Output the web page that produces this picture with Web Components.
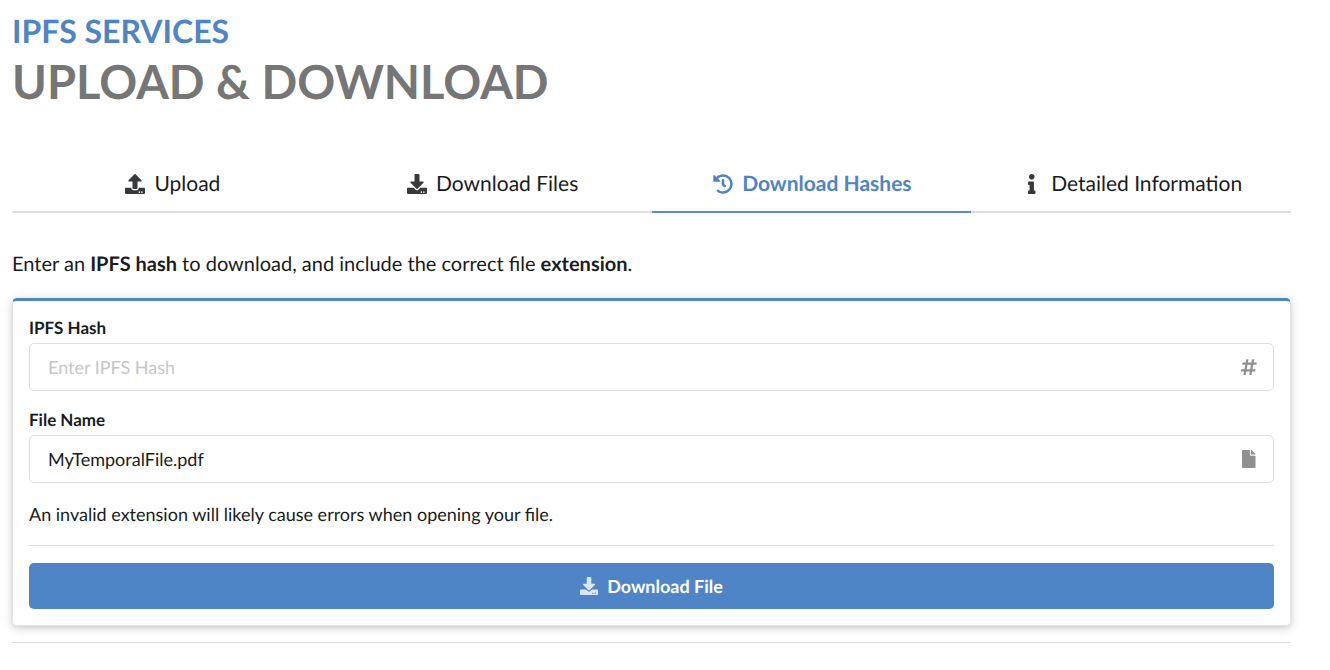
<!DOCTYPE html>
<html lang="en">
<head>
<meta charset="utf-8">
<title>IPFS Services</title>
<style>
  body {
    margin: 0;
    padding: 11px 39px 24px 12px;
    background: #fff;
    color: #1b1c1d;
    font-family: Lato, "Liberation Sans", sans-serif;
    font-size: 20px;
    line-height: 28px;
    text-rendering: geometricPrecision;
  }
</style>
</head>
<body>
<ipfs-page></ipfs-page>
<script>
const DOTS = 'zm-124 88c0-11-9-20-20-20s-20 9-20 20 9 20 20 20 20-9 20-20zm64 0c0-11-9-20-20-20s-20 9-20 20 9 20 20 20 20-9 20-20z';
const ICONS = {
  upload: [512, 'M296 384h-80c-13.3 0-24-10.7-24-24V192h-87.7c-17.8 0-26.7-21.5-14.1-34.1L242.3 5.7c7.5-7.5 19.8-7.5 27.3 0l152.2 152.2c12.6 12.6 3.7 34.1-14.1 34.1H320v168c0 13.3-10.7 24-24 24zm216-8v112c0 13.3-10.7 24-24 24H24c-13.3 0-24-10.7-24-24V376c0-13.3 10.7-24 24-24h136v8c0 30.9 25.1 56 56 56h80c30.9 0 56-25.1 56-56v-8h136c13.3 0 24 10.7 24 24' + DOTS],
  download: [512, 'M216 0h80c13.3 0 24 10.7 24 24v168h87.7c17.8 0 26.7 21.5 14.1 34.1L269.7 378.3c-7.5 7.5-19.8 7.5-27.3 0L90.1 226.1c-12.6-12.6-3.7-34.1 14.1-34.1H192V24c0-13.3 10.7-24 24-24zm296 376v112c0 13.3-10.7 24-24 24H24c-13.3 0-24-10.7-24-24V376c0-13.3 10.7-24 24-24h146.7l49 49c20.1 20.1 52.5 20.1 72.6 0l49-49H488c13.3 0 24 10.7 24 24' + DOTS],
  history: [512, 'M504 255.531c.253 136.64-111.18 248.372-247.82 248.468-59.015.042-113.223-20.53-155.822-54.911-11.077-8.94-11.905-25.541-1.839-35.607l11.267-11.267c8.609-8.609 22.353-9.551 31.891-1.984C173.062 425.135 212.781 440 256 440c101.705 0 184-82.311 184-184 0-101.705-82.311-184-184-184-48.814 0-93.149 18.969-126.068 49.932l50.754 50.754c10.08 10.08 2.941 27.314-11.313 27.314H24c-8.837 0-16-7.163-16-16V38.627c0-14.254 17.234-21.393 27.314-11.314l49.372 49.372C129.209 34.136 189.552 8 256 8c136.81 0 247.747 110.78 248 247.531zm-180.912 78.784l9.823-12.63c8.138-10.463 6.253-25.542-4.21-33.679L288 256.349V152c0-13.255-10.745-24-24-24h-16c-13.255 0-24 10.745-24 24v135.651l65.409 50.874c10.463 8.137 25.541 6.253 33.679-4.21z'],
  info: [192, 'M20 424.229h20V279.771H20c-11.046 0-20-8.954-20-20V212c0-11.046 8.954-20 20-20h112c11.046 0 20 8.954 20 20v212.229h20c11.046 0 20 8.954 20 20V492c0 11.046-8.954 20-20 20H20c-11.046 0-20-8.954-20-20v-47.771c0-11.046 8.954-20 20-20zM96 0C56.235 0 24 32.235 24 72s32.235 72 72 72 72-32.235 72-72S135.764 0 96 0z'],
  hashtag: [448, 'M440.667 182.109l7.143-40c1.313-7.355-4.342-14.109-11.813-14.109h-74.81l14.623-81.891C377.123 38.754 371.468 32 363.997 32h-40.632a12 12 0 0 0-11.813 9.891L296.175 128H197.54l14.623-81.891C213.477 38.754 207.822 32 200.35 32h-40.632a12 12 0 0 0-11.813 9.891L132.528 128H53.432a12 12 0 0 0-11.813 9.891l-7.143 40C33.163 185.246 38.818 192 46.289 192h74.81L98.242 320H19.146a12 12 0 0 0-11.813 9.891l-7.143 40C-1.123 377.246 4.532 384 12.003 384h74.81L72.19 465.891C70.877 473.246 76.532 480 84.003 480h40.632a12 12 0 0 0 11.813-9.891L151.826 384h98.634l-14.623 81.891C234.523 473.246 240.178 480 247.65 480h40.632a12 12 0 0 0 11.813-9.891L315.472 384h79.096a12 12 0 0 0 11.813-9.891l7.143-40c1.313-7.355-4.342-14.109-11.813-14.109h-74.81l22.857-128h79.096a12 12 0 0 0 11.813-9.891zM261.889 320h-98.634l22.857-128h98.634l-22.857 128z'],
  file: [384, 'M224 136V0H24C10.7 0 0 10.7 0 24v464c0 13.3 10.7 24 24 24h336c13.3 0 24-10.7 24-24V160H248c-13.2 0-24-10.8-24-24zm160-14.1v6.1H256V0h6.1c6.4 0 12.5 2.5 17 7l97.9 98c4.5 4.5 7 10.6 7 16.9z']
};

class Base extends HTMLElement {
  connectedCallback() {
    if (!this.shadowRoot) this.attachShadow({ mode: 'open' }).innerHTML = this.render();
  }
}

customElements.define('ui-icon', class extends Base {
  render() {
    const [w, d] = ICONS[this.getAttribute('name')];
    return `<style>
      :host { display: inline-flex; justify-content: center; width: var(--icon-width, 24px); height: var(--icon-size, 20px); flex: none; }
      svg { display: block; height: 100%; fill: currentColor; }
    </style><svg viewBox="0 0 ${w} 512" aria-hidden="true"><path d="${d}"/></svg>`;
  }
});

customElements.define('page-heading', class extends Base {
  render() {
    return `<style>
      :host { display: block; font-weight: 700; text-transform: uppercase; }
      p, h1 { margin: 0; font-weight: inherit; }
      p { color: #4f85c6; font-size: 32px; line-height: 40px; }
      h1 { color: #767676; font-size: 47px; line-height: 62px; }
    </style><p><slot name="section"></slot></p><h1><slot></slot></h1>`;
  }
});

customElements.define('tab-bar', class extends Base {
  render() {
    return `<style>
      :host { display: block; margin-top: 44px; }
      nav { display: flex; border-bottom: 2px solid #dedede; }
    </style><nav><slot></slot></nav>`;
  }
});

customElements.define('tab-link', class extends Base {
  render() {
    return `<style>
      :host { display: block; flex: 1 1 0; margin-bottom: -2px; }
      a { display: flex; align-items: center; justify-content: center; gap: 7px; height: 54px;
          border-bottom: 2px solid transparent; color: inherit; font-size: 21px; text-decoration: none; }
      ui-icon { color: #38393a; }
      :host([active]) a { color: #4f85c6; border-color: #5b8ccb; font-weight: 700; }
      :host([active]) ui-icon { color: inherit; }
    </style><a href="#${this.getAttribute('icon')}"><ui-icon name="${this.getAttribute('icon')}"></ui-icon><span><slot></slot></span></a>`;
  }
});

customElements.define('form-panel', class extends Base {
  render() {
    return `<style>
      :host { display: block; box-sizing: border-box; padding: 16px; border: 1px solid #e2e3e3;
              border-top: 3px solid #4f85c6; border-radius: 5px;
              box-shadow: 0 2px 4px rgba(34,36,38,.12), 0 2px 12px rgba(34,36,38,.15); }
    </style><slot></slot>`;
  }
});

customElements.define('text-field', class extends Base {
  render() {
    const a = n => this.getAttribute(n) || '';
    return `<style>
      :host { display: block; margin-bottom: 18px; }
      label { display: block; margin-bottom: 5px; font-size: 17px; line-height: 21px; font-weight: 700; }
      .box { display: flex; align-items: center; height: 48px; box-sizing: border-box; padding-right: 12px;
             border: 1px solid #dedede; border-radius: 5px; }
      input { flex: 1; min-width: 0; height: 100%; box-sizing: border-box; padding: 0 18px; border: 0;
              outline: 0; background: none; color: inherit; font: inherit; font-size: 18px; text-rendering: inherit; }
      input::placeholder { color: #c7c7c7; opacity: 1; }
      ui-icon { color: #909090; --icon-size: 18px; }
    </style>
    <label for="field">${a('label')}</label>
    <div class="box"><input id="field" type="text" value="${a('value')}" placeholder="${a('placeholder')}"><ui-icon name="${a('icon')}"></ui-icon></div>`;
  }
});

customElements.define('action-button', class extends Base {
  render() {
    return `<style>
      :host { display: block; }
      button { display: flex; align-items: center; justify-content: center; gap: 9px; width: 100%; height: 46px;
               padding: 0; border: 0; border-radius: 5px; background: #4f85c6; color: #fff;
               font: inherit; font-size: 18px; font-weight: 700; text-rendering: inherit; cursor: pointer; }
      ui-icon { --icon-size: 18px; --icon-width: 18px; opacity: .8; }
    </style><button type="button"><ui-icon name="${this.getAttribute('icon')}"></ui-icon><span><slot></slot></span></button>`;
  }
});

customElements.define('ipfs-page', class extends Base {
  render() {
    return `<style>
      :host { display: block; }
      p { margin: 0; }
      hr { margin: 0; border: 0; border-top: 1px solid #dedede; }
      .intro { margin: 37px 0 20px; }
      .note { font-size: 18px; line-height: 26px; }
      .rule { margin: 18px 0 17px; }
      .end { margin-top: 16px; }
    </style>
    <page-heading><span slot="section">IPFS Services</span>Upload &amp; Download</page-heading>
    <tab-bar>
      <tab-link icon="upload">Upload</tab-link>
      <tab-link icon="download">Download Files</tab-link>
      <tab-link icon="history" active>Download Hashes</tab-link>
      <tab-link icon="info">Detailed Information</tab-link>
    </tab-bar>
    <p class="intro">Enter an <b>IPFS hash</b> to download, and include the correct file <b>extension</b>.</p>
    <form-panel>
      <text-field label="IPFS Hash" placeholder="Enter IPFS Hash" icon="hashtag"></text-field>
      <text-field label="File Name" value="MyTemporalFile.pdf" icon="file"></text-field>
      <p class="note">An invalid extension will likely cause errors when opening your file.</p>
      <hr class="rule">
      <action-button icon="download">Download File</action-button>
    </form-panel>
    <hr class="end">`;
  }
});
</script>
</body>
</html>
